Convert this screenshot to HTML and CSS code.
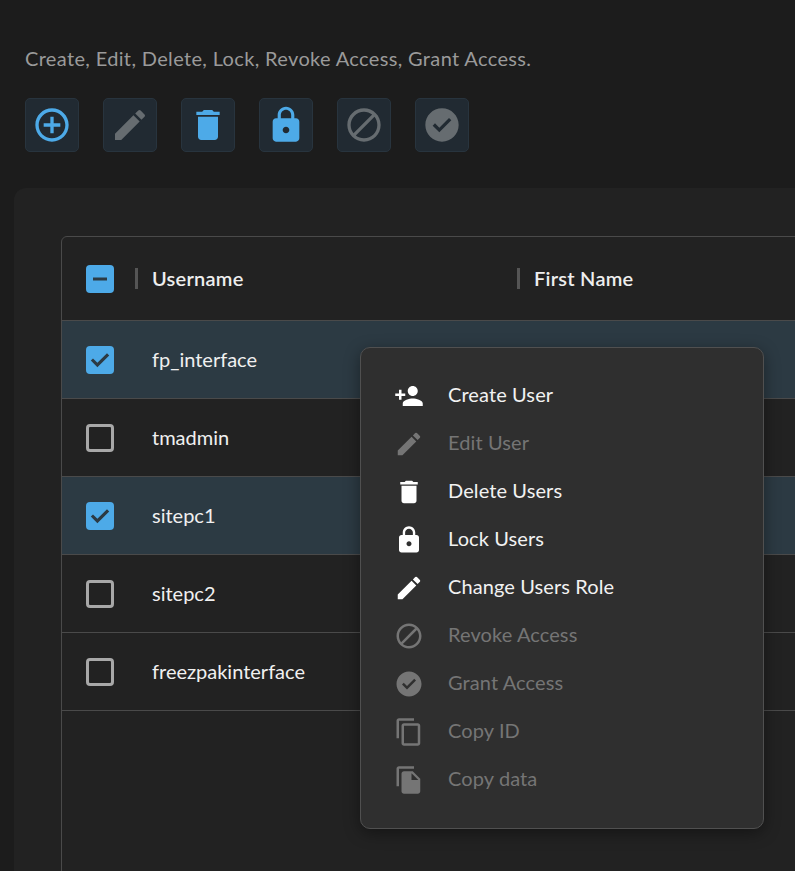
FILE: index.html
```html
<!DOCTYPE html>
<html lang="en">
<head>
  <meta charset="UTF-8" />
  <title>Users</title>
  <link rel="stylesheet" href="styles.css">
</head>
<body>

<p class="intro">Create, Edit, Delete, Lock, Revoke Access, Grant Access.</p>

<!-- Toolbar -->
<div class="toolbar">
  <button class="tool on"><svg viewBox="0 0 24 24"><path d="M13 7h-2v4H7v2h4v4h2v-4h4v-2h-4V7zm-1-5C6.48 2 2 6.48 2 12s4.48 10 10 10 10-4.48 10-10S17.52 2 12 2zm0 18c-4.41 0-8-3.59-8-8s3.59-8 8-8 8 3.59 8 8-3.59 8-8 8z"/></svg></button>
  <button class="tool"><svg viewBox="0 0 24 24"><path d="M3 17.25V21h3.75L17.81 9.94l-3.75-3.75L3 17.25zM20.71 7.04c.39-.39.39-1.02 0-1.41l-2.34-2.34a.9959.9959 0 0 0-1.41 0l-1.83 1.83 3.75 3.75 1.83-1.83z"/></svg></button>
  <button class="tool on"><svg viewBox="0 0 24 24"><path d="M6 19c0 1.1.9 2 2 2h8c1.1 0 2-.9 2-2V7H6v12zM19 4h-3.5l-1-1h-5l-1 1H5v2h14V4z"/></svg></button>
  <button class="tool on"><svg viewBox="0 0 24 24"><path d="M18 8h-1V6c0-2.76-2.24-5-5-5S7 3.24 7 6v2H6c-1.1 0-2 .9-2 2v10c0 1.1.9 2 2 2h12c1.1 0 2-.9 2-2V10c0-1.1-.9-2-2-2zm-6 9c-1.1 0-2-.9-2-2s.9-2 2-2 2 .9 2 2-.9 2-2 2zm3.1-9H8.9V6c0-1.71 1.39-3.1 3.1-3.1 1.71 0 3.1 1.39 3.1 3.1v2z"/></svg></button>
  <button class="tool"><svg viewBox="0 0 24 24"><path d="M12 2C6.48 2 2 6.48 2 12s4.48 10 10 10 10-4.48 10-10S17.52 2 12 2zM4 12c0-4.42 3.58-8 8-8 1.85 0 3.55.63 4.9 1.69L5.69 16.9C4.63 15.55 4 13.85 4 12zm8 8c-1.85 0-3.55-.63-4.9-1.69L18.31 7.1C19.37 8.45 20 10.15 20 12c0 4.42-3.58 8-8 8z"/></svg></button>
  <button class="tool"><svg viewBox="0 0 24 24"><path d="M12 2C6.48 2 2 6.48 2 12s4.48 10 10 10 10-4.48 10-10S17.52 2 12 2zm-1.6 14.4l-4-4 1.4-1.4 2.6 2.6 5.8-5.8 1.4 1.4-7.2 7.2z"/></svg></button>
</div>

<!-- Users table -->
<section class="panel">
  <div class="table">
    <div class="head">
      <span class="box checked"><svg viewBox="0 0 28 28"><path d="M7 12.5h14v3H7z"/></svg></span>
      <span class="col col-user">Username</span>
      <span class="col">First Name</span>
    </div>
    <div class="row selected">
      <span class="box checked"><svg viewBox="0 0 28 28"><path d="M11.4 21.2L4.8 14.6l2.2-2.2 4.4 4.4 9.6-9.6 2.2 2.2z"/></svg></span>
      <span class="name">fp_interface</span>
    </div>
    <div class="row">
      <span class="box"></span>
      <span class="name">tmadmin</span>
    </div>
    <div class="row selected">
      <span class="box checked"><svg viewBox="0 0 28 28"><path d="M11.4 21.2L4.8 14.6l2.2-2.2 4.4 4.4 9.6-9.6 2.2 2.2z"/></svg></span>
      <span class="name">sitepc1</span>
    </div>
    <div class="row">
      <span class="box"></span>
      <span class="name">sitepc2</span>
    </div>
    <div class="row">
      <span class="box"></span>
      <span class="name">freezpakinterface</span>
    </div>
  </div>
</section>

<!-- Context menu -->
<ul class="menu">
  <li><svg viewBox="0 0 24 24"><path d="M15 12c2.21 0 4-1.79 4-4s-1.79-4-4-4-4 1.79-4 4 1.79 4 4 4zm-9-2V7H4v3H1v2h3v3h2v-3h3v-2H6zm9 4c-2.67 0-8 1.34-8 4v2h16v-2c0-2.66-5.33-4-8-4z"/></svg><span>Create User</span></li>
  <li class="off"><svg viewBox="0 0 24 24"><path d="M3 17.25V21h3.75L17.81 9.94l-3.75-3.75L3 17.25zM20.71 7.04c.39-.39.39-1.02 0-1.41l-2.34-2.34a.9959.9959 0 0 0-1.41 0l-1.83 1.83 3.75 3.75 1.83-1.83z"/></svg><span>Edit User</span></li>
  <li><svg viewBox="0 0 24 24"><path d="M6 19c0 1.1.9 2 2 2h8c1.1 0 2-.9 2-2V7H6v12zM19 4h-3.5l-1-1h-5l-1 1H5v2h14V4z"/></svg><span>Delete Users</span></li>
  <li><svg viewBox="0 0 24 24"><path d="M18 8h-1V6c0-2.76-2.24-5-5-5S7 3.24 7 6v2H6c-1.1 0-2 .9-2 2v10c0 1.1.9 2 2 2h12c1.1 0 2-.9 2-2V10c0-1.1-.9-2-2-2zm-6 9c-1.1 0-2-.9-2-2s.9-2 2-2 2 .9 2 2-.9 2-2 2zm3.1-9H8.9V6c0-1.71 1.39-3.1 3.1-3.1 1.71 0 3.1 1.39 3.1 3.1v2z"/></svg><span>Lock Users</span></li>
  <li><svg viewBox="0 0 24 24"><path d="M3 17.25V21h3.75L17.81 9.94l-3.75-3.75L3 17.25zM20.71 7.04c.39-.39.39-1.02 0-1.41l-2.34-2.34a.9959.9959 0 0 0-1.41 0l-1.83 1.83 3.75 3.75 1.83-1.83z"/></svg><span>Change Users Role</span></li>
  <li class="off"><svg viewBox="0 0 24 24"><path d="M12 2C6.48 2 2 6.48 2 12s4.48 10 10 10 10-4.48 10-10S17.52 2 12 2zM4 12c0-4.42 3.58-8 8-8 1.85 0 3.55.63 4.9 1.69L5.69 16.9C4.63 15.55 4 13.85 4 12zm8 8c-1.85 0-3.55-.63-4.9-1.69L18.31 7.1C19.37 8.45 20 10.15 20 12c0 4.42-3.58 8-8 8z"/></svg><span>Revoke Access</span></li>
  <li class="off"><svg viewBox="0 0 24 24"><path d="M12 2C6.48 2 2 6.48 2 12s4.48 10 10 10 10-4.48 10-10S17.52 2 12 2zm-1.6 14.4l-4-4 1.4-1.4 2.6 2.6 5.8-5.8 1.4 1.4-7.2 7.2z"/></svg><span>Grant Access</span></li>
  <li class="off"><svg viewBox="0 0 24 24"><path d="M16 1H4c-1.1 0-2 .9-2 2v14h2V3h12V1zm3 4H8c-1.1 0-2 .9-2 2v14c0 1.1.9 2 2 2h11c1.1 0 2-.9 2-2V7c0-1.1-.9-2-2-2zm0 16H8V7h11v14z"/></svg><span>Copy ID</span></li>
  <li class="off"><svg viewBox="0 0 24 24"><path d="M16 1H4c-1.1 0-2 .9-2 2v14h2V3h12V1zm-1 4l6 6v10c0 1.1-.9 2-2 2H7.99C6.89 23 6 22.1 6 21l.01-14c0-1.1.89-2 1.99-2h7zm-1 7h5.5L14 6.5V12z"/></svg><span>Copy data</span></li>
</ul>

</body>
</html>
```

FILE: styles.css
```css
html, body {
  height: 100%;
}

body {
  margin: 0;
  padding: 46px 0 0 25px;
  box-sizing: border-box;
  overflow: hidden;
  background: #1c1c1c;
  color: #fff;
  font-family: Lato, "Noto Sans", sans-serif;
}

.intro {
  margin: 0 0 27px;
  font-size: 20px;
  line-height: 25px;
  letter-spacing: 0.35px;
  color: #9a9a9a;
}

/* Toolbar */
.toolbar {
  display: flex;
  gap: 24px;
}

.tool {
  width: 54px;
  height: 54px;
  padding: 0;
  display: flex;
  align-items: center;
  justify-content: center;
  background: #212a32;
  border: 1px solid #28343e;
  border-radius: 5px;
}

.tool svg {
  width: 40px;
  height: 40px;
  fill: #666c70;
}

.tool.on svg {
  fill: #4daae8;
}

/* Table */
.panel {
  margin: 36px 0 0 -11px;
  padding: 48px 0 0 47px;
  width: 900px;
  height: 800px;
  background: #222;
  border-radius: 12px 0 0 0;
}

.table {
  height: 760px;
  border: 1px solid #4a4a4a;
  border-radius: 6px 0 0 0;
}

.head, .row {
  display: flex;
  align-items: center;
  padding-left: 24px;
  box-sizing: border-box;
  border-bottom: 1px solid #4a4a4a;
}

.head {
  height: 84px;
  font-size: 20px;
  font-weight: 600;
  letter-spacing: 0.25px;
  color: #eee;
}

.row {
  height: 78px;
  font-size: 20px;
  color: #f0f0f0;
}

.row.selected {
  background: #2c3a43;
}

.box {
  flex: none;
  width: 28px;
  height: 28px;
  box-sizing: border-box;
  border: 3px solid #a8a8a8;
  border-radius: 4px;
}

.box.checked {
  background: #4daae8;
  border: 0;
}

.box svg {
  display: block;
  fill: #2c3a43;
}

.name {
  margin-left: 38px;
  padding-bottom: 2px;
}

.col {
  padding-left: 14px;
  border-left: 3px solid #555;
  line-height: 21px;
}

.col-user {
  width: 365px;
  margin-left: 21px;
}

/* Context menu */
.menu {
  position: absolute;
  left: 360px;
  top: 347px;
  width: 404px;
  height: 482px;
  margin: 0;
  padding: 24px 0 0 33px;
  box-sizing: border-box;
  list-style: none;
  background: #2f2f2f;
  border: 1px solid #505050;
  border-radius: 10px;
  box-shadow: 0 4px 16px rgba(0,0,0,0.4);
}

.menu li {
  display: flex;
  align-items: center;
  gap: 24px;
  height: 48px;
  font-size: 20px;
  letter-spacing: 0.1px;
  color: #f2f2f2;
}

.menu li span {
  padding-bottom: 4px;
}

.menu svg {
  flex: none;
  width: 30px;
  height: 30px;
  fill: #fff;
}

.menu li.off {
  color: #757575;
}

.menu li.off svg {
  fill: #757575;
}
```
